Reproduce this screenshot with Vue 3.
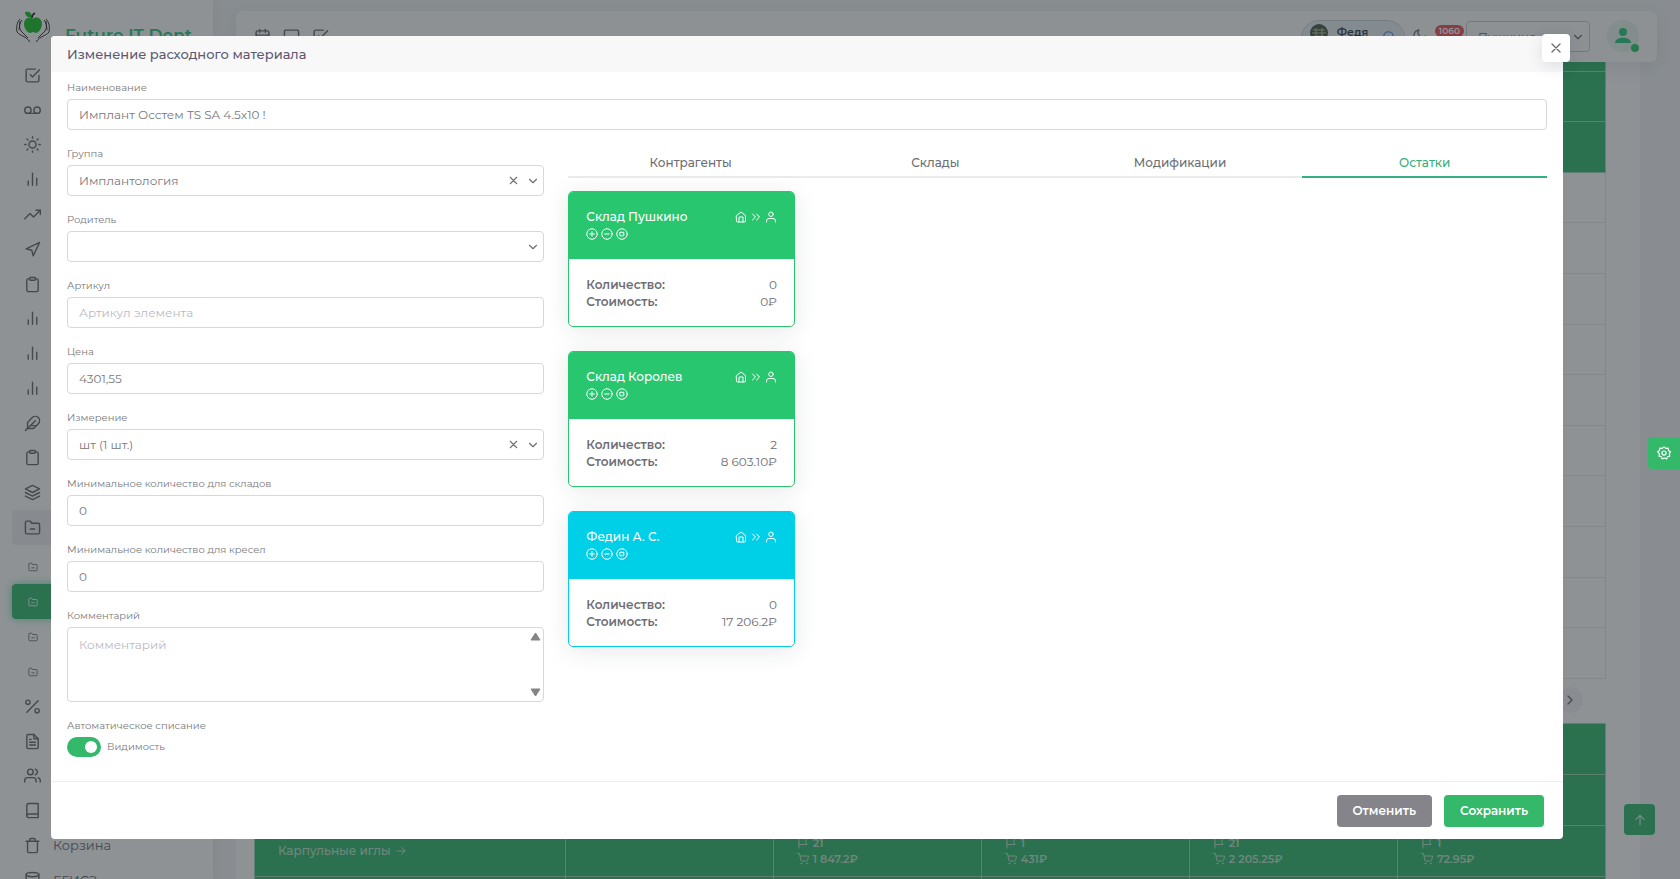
<script setup>
import {ref, h} from 'vue';

const icons = {
  check: '<path d="M9 11l3 3L22 4"/><path d="M21 12v7a2 2 0 0 1-2 2H5a2 2 0 0 1-2-2V5a2 2 0 0 1 2-2h11"/>',
  voicemail: '<circle cx="5.5" cy="11.5" r="4.5"/><circle cx="18.5" cy="11.5" r="4.5"/><path d="M5.5 16h13"/>',
  sun: '<circle cx="12" cy="12" r="5"/><path d="M12 1v2M12 21v2M4.2 4.2l1.4 1.4M18.4 18.4l1.4 1.4M1 12h2M21 12h2M4.2 19.8l1.4-1.4M18.4 5.6l1.4-1.4"/>',
  bars: '<path d="M18 20V10M12 20V3M6 20v-6"/>',
  trend: '<path d="M23 6l-9.500 9.500-5-5L1 18"/><path d="M17 6h6v6"/>',
  send: '<path d="M3 11l19-9-9 19-2-8-8-2z"/>',
  clipboard: '<path d="M16 4h2a2 2 0 0 1 2 2v14a2 2 0 0 1-2 2H6a2 2 0 0 1-2-2V6a2 2 0 0 1 2-2h2"/><rect x="8" y="2" width="8" height="4" rx="1"/>',
  feather: '<path d="M20.200 12.200a6 6 0 0 0-8.500-8.500L5 10.500V19h8.500z"/><path d="M16 8L2 22M17.500 15H9"/>',
  layers: '<path d="M12 2L2 7l10 5 10-5-10-5zM2 17l10 5 10-5M2 12l10 5 10-5"/>',
  folder: '<path d="M22 19a2 2 0 0 1-2 2H4a2 2 0 0 1-2-2V5a2 2 0 0 1 2-2h5l2 3h9a2 2 0 0 1 2 2z"/><path d="M9 14h6"/>',
  percent: '<path d="M20 4L4 20"/><circle cx="5.500" cy="6" r="3"/><circle cx="18.500" cy="18" r="3"/>',
  file: '<path d="M14 2H6a2 2 0 0 0-2 2v16a2 2 0 0 0 2 2h12a2 2 0 0 0 2-2V8z"/><path d="M14 2v6h6M16 13H8M16 17H8M10 9H8"/>',
  users: '<path d="M17 21v-2a4 4 0 0 0-4-4H5a4 4 0 0 0-4 4v2"/><circle cx="9" cy="7" r="4"/><path d="M23 21v-2a4 4 0 0 0-3-3.870M16 3.130a4 4 0 0 1 0 7.750"/>',
  book: '<path d="M4 19.500A2.500 2.500 0 0 1 6.500 17H20"/><path d="M6.500 2H20v20H6.500A2.500 2.500 0 0 1 4 19.500v-15A2.500 2.500 0 0 1 6.500 2z"/>',
  trash: '<path d="M3 6h18M19 6v14a2 2 0 0 1-2 2H7a2 2 0 0 1-2-2V6m3 0V4a2 2 0 0 1 2-2h4a2 2 0 0 1 2 2v2"/>',
  database: '<ellipse cx="12" cy="5" rx="9" ry="3"/><path d="M21 12c0 1.660-4 3-9 3s-9-1.340-9-3"/><path d="M3 5v14c0 1.660 4 3 9 3s9-1.340 9-3V5"/>',
  calendar: '<rect x="3" y="4" width="18" height="18" rx="2"/><path d="M16 2v4M8 2v4M3 10h18"/>',
  square: '<rect x="2" y="3" width="20" height="17" rx="2"/>',
  search: '<circle cx="11" cy="11" r="8"/><path d="M21 21l-4.300-4.300"/>',
  moon: '<path d="M21 12.800A9 9 0 1 1 11.200 3 7 7 0 0 0 21 12.800z"/>',
  down: '<path d="M6 9l6 6 6-6"/>',
  right: '<path d="M9 18l6-6-6-6"/>',
  x: '<path d="M18 6L6 18M6 6l12 12"/>',
  arrowRight: '<path d="M4 12h16M13 5l7 7-7 7"/>',
  arrowUp: '<path d="M12 20V4M5 11l7-7 7 7"/>',
  flag: '<path d="M4 15V3h16l-3 6 3 6H4zM4 22v-7"/>',
  cart: '<circle cx="9" cy="21" r="1"/><circle cx="20" cy="21" r="1"/><path d="M1 1h4l2.700 13.400a2 2 0 0 0 2 1.600h9.700a2 2 0 0 0 2-1.600L23 6H6"/>',
  home: '<path d="M3 9l9-7 9 7v11a2 2 0 0 1-2 2H5a2 2 0 0 1-2-2z"/><path d="M8 22V12h8v10"/>',
  chevrons: '<path d="M13 18l6-6-6-6M5 18l6-6-6-6"/>',
  user: '<path d="M21 22v-2a5 5 0 0 0-5-5H8a5 5 0 0 0-5 5v2"/><circle cx="12" cy="6.500" r="4.500"/>',
  plus: '<circle cx="12" cy="12" r="10.500"/><path d="M12 7.500v9M7.500 12h9"/>',
  minus: '<circle cx="12" cy="12" r="10.500"/><path d="M7.500 12h9"/>',
  stop: '<circle cx="12" cy="12" r="10.500"/><rect x="8.500" y="8.500" width="7" height="7"/>',
  gear: '<path d="M12 1.500l3 2.600 4-.4.700 3.900 3.300 2.400-1.900 3.500.900 3.900-3.900 1.100-1.700 3.600-3.700-1.400-3.700 1.400-1.700-3.600-3.900-1.100.900-3.900L1 10l3.300-2.400L5 3.700l4 .4z"/><circle cx="12" cy="12" r="3.500"/>',
};

const Icon = (props) => h('svg', {
  width: props.size,
  height: props.size,
  viewBox: '0 0 24 24',
  fill: 'none',
  stroke: 'currentColor',
  'stroke-width': 2,
  'stroke-linecap': 'round',
  'stroke-linejoin': 'round',
  innerHTML: icons[props.name],
});
Icon.props = ['name', 'size'];

const menuTop = ['check', 'voicemail', 'sun', 'bars', 'trend', 'send', 'clipboard', 'bars', 'bars', 'bars', 'feather', 'clipboard', 'layers', 'folder'];
const menuBottom = [
  {icon: 'percent'},
  {icon: 'file'},
  {icon: 'users'},
  {icon: 'book'},
  {icon: 'trash', text: 'Корзина'},
  {icon: 'database', text: 'ЕГИСЗ'},
];

const totals = [
  {count: '21', sum: '1 847.2₽'},
  {count: '1', sum: '431₽'},
  {count: '21', sum: '2 205.25₽'},
  {count: '1', sum: '72.95₽'},
];

const tabs = ['Контрагенты', 'Склады', 'Модификации', 'Остатки'];
const activeTab = ref('Остатки');

const stocks = [
  {name: 'Склад Пушкино', count: '0', sum: '0', type: 'store'},
  {name: 'Склад Королев', count: '2', sum: '8 603.10', type: 'store'},
  {name: 'Федин А. С.', count: '0', sum: '17 206.2', type: 'staff'},
];

const isOpen = ref(true);
const branch = ref('Пушкино');
const form = ref({
  name: 'Имплант Осстем TS SA 4.5x10 !',
  group: 'Имплантология',
  parent: '',
  article: '',
  price: '4301,55',
  unit: 'шт (1 шт.)',
  minStore: '0',
  minChair: '0',
  comment: '',
  auto: true,
});

const closeModal = () => {
  isOpen.value = false;
};
</script>

<template>
  <div class="page">
    <aside class="sidebar">
      <div class="brand">
        <svg class="logo" width="36" height="34" viewBox="0 0 36 34">
          <path d="M18 9c-3-3-9-1-9 5 0 5 4 9 6 9 1 0 2-1 3-1s2 1 3 1c2 0 6-4 6-9 0-6-6-8-9-5z" fill="#1fc029"/>
          <path d="M17 7c-4 1-7-1-7-5 4-1 7 1 7 5z" fill="#1fc029"/>
          <path d="M17 8c0-2 1-4 3-5" stroke="#222" fill="none" stroke-width="1.500"/>
          <path d="M5 9c-3 3-4 8-3 13 3 4 9 4 13 10M7 10c-3 4-3 8-1 11l7 7M31 9c3 3 4 8 3 13-3 4-9 4-13 10M29 10c3 4 3 8 1 11l-7 7M5 11l-1 9M31 11l1 9" stroke="#333" fill="none"/>
        </svg>
        <span class="brand-text">Future IT Dent</span>
      </div>
      <nav class="menu menu-top">
        <a v-for="(icon, i) in menuTop" :key="i" href="#" class="menu-item" :class="{open: icon === 'folder'}">
          <Icon :name="icon" size="17"/>
        </a>
      </nav>
      <nav class="menu menu-sub">
        <a v-for="i in 4" :key="i" href="#" class="menu-item" :class="{active: i === 2}">
          <Icon name="folder" size="10"/>
        </a>
      </nav>
      <nav class="menu menu-bottom">
        <a v-for="item in menuBottom" :key="item.icon" href="#" class="menu-item">
          <Icon :name="item.icon" size="17"/>
          <span>{{ item.text }}</span>
        </a>
      </nav>
    </aside>

    <main class="main">
      <header class="navbar">
        <div class="shortcuts">
          <Icon name="calendar" size="17"/>
          <Icon name="square" size="17"/>
          <Icon name="check" size="17"/>
        </div>
        <div class="nav-right">
          <div class="person">
            <svg width="18" height="18" viewBox="0 0 18 18">
              <circle cx="9" cy="9" r="9" fill="#4b5a48"/>
              <path d="M3 6h12M2 9h14M4 12h10M6 4v10M12 4v10" stroke="#b9c9a8" fill="none"/>
            </svg>
            <span>Федя</span>
            <Icon name="search" size="14"/>
          </div>
          <Icon name="moon" size="15"/>
          <span class="badge">1060</span>
          <div class="branch">
            <select v-model="branch" aria-label="Филиал">
              <option>Пушкино</option>
            </select>
            <Icon name="down" size="14"/>
          </div>
          <div class="avatar">
            <svg width="16" height="16" viewBox="0 0 16 16" fill="#28c780">
              <circle cx="8" cy="4" r="4"/>
              <path d="M0 15c0-7 16-7 16 0z"/>
            </svg>
            <i class="online"></i>
          </div>
        </div>
      </header>

      <section class="content">
        <table class="grid grid-top">
          <tbody>
            <tr v-for="i in 13" :key="i" :class="{green: i < 4}">
              <td></td>
            </tr>
          </tbody>
        </table>
        <div class="scroller">
          <button type="button" aria-label="Вправо"><Icon name="right" size="16"/></button>
        </div>
        <table class="grid grid-bottom">
          <tbody>
            <tr v-for="i in 4" :key="i" class="green">
              <td class="first">
                <a v-if="i === 3" href="#">Карпульные иглы <Icon name="arrowRight" size="12"/></a>
              </td>
              <td></td>
              <td v-for="(t, k) in totals" :key="k">
                <template v-if="i === 3">
                  <div class="total"><Icon name="flag" size="12"/>{{ t.count }}</div>
                  <div class="total"><Icon name="cart" size="12"/>{{ t.sum }}</div>
                </template>
              </td>
            </tr>
          </tbody>
        </table>
      </section>
    </main>
    <button type="button" class="to-top" aria-label="Наверх"><Icon name="arrowUp" size="14"/></button>
  </div>

  <div v-if="isOpen" class="modal-overlay" @click.self="closeModal">
    <form class="modal" @submit.prevent="closeModal">
      <div class="modal-header">
        <h5>Изменение расходного материала</h5>
        <button type="button" class="close" aria-label="Закрыть" @click="closeModal"><Icon name="x" size="16"/></button>
      </div>

      <div class="modal-body">
        <div class="field wide">
          <label for="name">Наименование</label>
          <input id="name" v-model="form.name" type="text"/>
        </div>

        <div class="left">
          <div class="field">
            <label for="group">Группа</label>
            <div class="select">
              <select id="group" v-model="form.group">
                <option value=""></option>
                <option>Имплантология</option>
              </select>
              <button type="button" class="clear" aria-label="Очистить" @click="form.group = ''"><Icon name="x" size="13"/></button>
              <Icon class="arrow" name="down" size="14"/>
            </div>
          </div>
          <div class="field">
            <label for="parent">Родитель</label>
            <div class="select">
              <select id="parent" v-model="form.parent">
                <option value=""></option>
              </select>
              <Icon class="arrow" name="down" size="14"/>
            </div>
          </div>
          <div class="field">
            <label for="article">Артикул</label>
            <input id="article" v-model="form.article" type="text" placeholder="Артикул элемента"/>
          </div>
          <div class="field">
            <label for="price">Цена</label>
            <input id="price" v-model="form.price" type="text"/>
          </div>
          <div class="field">
            <label for="unit">Измерение</label>
            <div class="select">
              <select id="unit" v-model="form.unit">
                <option value=""></option>
                <option>шт (1 шт.)</option>
              </select>
              <button type="button" class="clear" aria-label="Очистить" @click="form.unit = ''"><Icon name="x" size="13"/></button>
              <Icon class="arrow" name="down" size="14"/>
            </div>
          </div>
          <div class="field">
            <label for="min-store">Минимальное количество для складов</label>
            <input id="min-store" v-model="form.minStore" type="text"/>
          </div>
          <div class="field">
            <label for="min-chair">Минимальное количество для кресел</label>
            <input id="min-chair" v-model="form.minChair" type="text"/>
          </div>
          <div class="field">
            <label for="comment">Комментарий</label>
            <div class="area">
              <textarea id="comment" v-model="form.comment" placeholder="Комментарий"></textarea>
              <svg class="area-up" width="11" height="9" viewBox="0 0 11 9"><path d="M5.500 1L10 8H1z"/></svg>
              <svg class="area-down" width="11" height="9" viewBox="0 0 11 9"><path d="M5.500 8L10 1H1z"/></svg>
            </div>
          </div>
          <div class="field">
            <span class="caption">Автоматическое списание</span>
            <div class="toggle">
              <input id="auto" v-model="form.auto" type="checkbox"/>
              <label for="auto">Видимость</label>
            </div>
          </div>
        </div>

        <div class="right">
          <div class="tabs" role="tablist">
            <button
              v-for="tab in tabs"
              :key="tab"
              type="button"
              role="tab"
              :class="{active: tab === activeTab}"
              @click="activeTab = tab"
            >{{ tab }}</button>
          </div>
          <div class="stocks">
            <article v-for="stock in stocks" :key="stock.name" class="card" :class="stock.type">
              <header>
                <div class="card-line">
                  <h6>{{ stock.name }}</h6>
                  <div class="move">
                    <Icon name="home" size="12"/>
                    <Icon name="chevrons" size="12"/>
                    <Icon name="user" size="12"/>
                  </div>
                </div>
                <div class="actions">
                  <button type="button" aria-label="Добавить"><Icon name="plus" size="12"/></button>
                  <button type="button" aria-label="Списать"><Icon name="minus" size="12"/></button>
                  <button type="button" aria-label="Обнулить"><Icon name="stop" size="12"/></button>
                </div>
              </header>
              <div class="card-body">
                <div class="card-line"><b>Количество:</b><span>{{ stock.count }}</span></div>
                <div class="card-line"><b>Стоимость:</b><span>{{ stock.sum }}₽</span></div>
              </div>
            </article>
          </div>
        </div>
      </div>

      <div class="modal-footer">
        <button type="button" class="btn cancel" @click="closeModal">Отменить</button>
        <button type="submit" class="btn save">Сохранить</button>
      </div>
    </form>
  </div>
  <button type="button" class="customizer" aria-label="Настройки"><Icon name="gear" size="14"/></button>
</template>

<style>
body {
  margin: 0;
  background: #f8f8f8;
}
</style>

<style scoped>
.page,
.modal-overlay {
  font-family: Montserrat, Inter, "Noto Sans", sans-serif;
  font-size: 12px;
  line-height: 16px;
  color: #6e6e73;
}

.page,
.page *,
.modal-overlay,
.modal-overlay *,
.customizer {
  box-sizing: border-box;
}

button,
input,
select,
textarea {
  font: inherit;
  color: inherit;
}

button {
  border: 0;
  padding: 0;
  background: none;
  cursor: pointer;
}

svg {
  display: block;
  flex: none;
}

a {
  color: inherit;
  text-decoration: none;
}

.page {
  display: flex;
  height: 100vh;
  overflow: hidden;
  background: #f0f1f2;
}

/* sidebar */
.sidebar {
  flex: none;
  width: 213px;
  background: #fbfbfb;
  box-shadow: 0 0 15px rgba(34, 41, 47, 0.08);
}

.brand {
  display: flex;
  gap: 14px;
  height: 58px;
  padding: 10px 0 0 15px;
}

.brand-text {
  padding-top: 14px;
  font-size: 17px;
  line-height: 22px;
  font-weight: 600;
  color: #28c780;
}

.menu {
  display: flex;
  flex-direction: column;
  padding-left: 12px;
}

.menu-top {
  height: 487px;
}

.menu-sub {
  height: 144px;
  padding-top: 4px;
}

.menu-bottom {
  height: 208px;
}

.menu-item {
  flex: 1;
  display: flex;
  align-items: center;
  gap: 12px;
  padding-left: 12px;
  font-size: 13px;
  color: #68696e;
}

.menu-item.open {
  background: #ececee;
  border-radius: 4px;
}

.menu-sub .menu-item {
  padding-left: 16px;
}

.menu-item.active {
  background: #34b96f;
  color: #fff;
  border-radius: 4px 0 0 4px;
  box-shadow: 0 0 8px rgba(40, 199, 111, 0.6);
}

/* top bar */
.main {
  flex: 1;
  display: flex;
  flex-direction: column;
  padding: 11px 23px 0;
}

.navbar {
  position: relative;
  z-index: 1;
  flex: none;
  display: flex;
  justify-content: space-between;
  height: 51px;
  padding: 9px 18px 0;
  background: #f8f8f8;
  border-radius: 6px;
  box-shadow: 0 4px 20px rgba(34, 41, 47, 0.1);
}

.shortcuts {
  display: flex;
  gap: 12px;
  padding-top: 8px;
  color: #68696e;
}

.nav-right {
  display: flex;
  align-items: flex-start;
}

.nav-right > svg {
  margin: 8px 10px 0 7px;
}

.person {
  display: flex;
  gap: 9px;
  width: 104px;
  height: 36px;
  padding: 3px 8px;
  border: 1px solid #c5d0d8;
  border-radius: 18px;
  background: #e6edf0;
  color: #3a3a44;
  font-size: 11px;
  font-weight: 600;
}

.person span {
  flex: 1;
}

.person svg:last-child {
  margin-top: 6px;
  color: #3a6fe0;
}

.badge {
  z-index: 1;
  height: 12px;
  margin: 5px 2px 0 -2px;
  padding: 0 4px;
  border-radius: 6px;
  background: #ea5455;
  color: #fff;
  font-size: 9px;
  line-height: 12px;
  font-weight: 600;
}

.branch {
  display: flex;
  align-items: center;
  width: 124px;
  height: 31px;
  margin-top: 1px;
  padding: 0 4px 0 11px;
  border: 1px solid #c8c8cc;
  border-radius: 4px;
}

.branch select {
  flex: 1;
  appearance: none;
  border: 0;
  background: none;
}

.avatar {
  position: relative;
  display: grid;
  place-items: center;
  width: 32px;
  height: 32px;
  margin-left: 17px;
  border-radius: 50%;
  background: #e2f0e9;
}

.online {
  position: absolute;
  right: 0;
  bottom: 0;
  width: 8px;
  height: 8px;
  border-radius: 50%;
  background: #28c76f;
}

/* background table */
.content {
  flex: none;
  margin: -42px 17px 0 0;
  padding: 0 34px 0 18px;
  background: #fafafb;
}

.grid {
  width: 100%;
  border-collapse: collapse;
  table-layout: fixed;
}

.grid-top {
  height: 659px;
}

.grid-bottom td {
  height: 51px;
}

.grid td {
  padding: 0 23px;
  border: 1px solid #e6e6ea;
}

.grid .green td {
  background: #34b96f;
  border-color: #9bd6b5;
  color: #bde2cc;
  font-weight: 500;
}

.grid .first {
  width: 23%;
}

.first a,
.total {
  display: flex;
  align-items: center;
  gap: 4px;
}

.total {
  font-size: 11px;
  font-weight: 600;
}

.scroller {
  display: flex;
  justify-content: flex-end;
  height: 44px;
  padding: 8px 23px 0;
}

.scroller button {
  display: grid;
  place-items: center;
  width: 26px;
  height: 26px;
  border-radius: 50%;
  background: #f0f0f2;
}

.to-top {
  position: fixed;
  right: 25px;
  bottom: 44px;
  display: grid;
  place-items: center;
  width: 31px;
  height: 31px;
  border-radius: 4px;
  background: #34b96f;
  color: #d6f0e0;
}

.customizer {
  position: fixed;
  z-index: 11;
  right: 0;
  top: 437px;
  display: grid;
  place-items: center;
  width: 32px;
  height: 32px;
  border-radius: 4px 0 0 4px;
  background: #34b96b;
  color: #fff;
}

/* modal */
.modal-overlay {
  position: fixed;
  z-index: 10;
  inset: 0;
  padding: 36px 0 0 51px;
  background: rgba(34, 41, 47, 0.5);
}

.modal {
  width: 90vw;
  background: #fff;
  border-radius: 4px;
}

.modal-header {
  position: relative;
  padding: 8px 16px;
  background: #f8f8f9;
  border-radius: 4px 4px 0 0;
}

h5,
h6 {
  margin: 0;
  font-weight: 500;
}

h5 {
  font-size: 13px;
  line-height: 20px;
  color: #5e5873;
}

.close {
  position: absolute;
  top: -2px;
  right: -7px;
  display: grid;
  place-items: center;
  width: 28px;
  height: 28px;
  background: #fff;
  border-radius: 4px;
  box-shadow: 0 4px 16px rgba(34, 41, 47, 0.12);
}

.modal-body {
  display: grid;
  grid-template-columns: repeat(12, 1fr);
  column-gap: 24px;
  padding: 8px 16px;
}

.wide {
  grid-column: span 12;
}

.left {
  grid-column: span 4;
}

.right {
  grid-column: span 8;
}

.field {
  margin-bottom: 16px;
}

.field > label,
.caption {
  display: block;
  margin-bottom: 3px;
  font-size: 10px;
  color: #78787c;
}

.field > input,
.select select,
textarea {
  display: block;
  width: 100%;
  height: 31px;
  padding: 0 11px;
  border: 1px solid #d8d6de;
  border-radius: 4px;
  background: #fff;
  color: #78787c;
  outline: 0;
}

.select {
  position: relative;
}

.select select {
  appearance: none;
}

.arrow {
  position: absolute;
  top: 9px;
  right: 4px;
}

.clear {
  position: absolute;
  top: 9px;
  right: 24px;
}

.area {
  position: relative;
}

textarea {
  height: 75px;
  padding: 9px 11px;
  resize: none;
}

::placeholder {
  color: #b9b9c3;
  opacity: 1;
}

.area svg {
  position: absolute;
  right: 3px;
  fill: #858386;
  stroke: #858386;
  stroke-linejoin: round;
}

.area-up {
  top: 5px;
}

.area-down {
  bottom: 5px;
}

.toggle {
  display: flex;
  align-items: center;
  gap: 6px;
  font-size: 10px;
  color: #78787c;
}

.toggle input {
  appearance: none;
  width: 34px;
  height: 20px;
  margin: 0;
  padding: 4px;
  border-radius: 10px;
  background: #d8d6de;
}

.toggle input::before {
  content: "";
  display: block;
  width: 12px;
  height: 12px;
  border-radius: 50%;
  background: #fff;
}

.toggle input:checked {
  background: #34b96b;
}

.toggle input:checked::before {
  margin-left: auto;
}

.tabs {
  display: flex;
  border-bottom: 2px solid #ebebed;
}

.tabs button {
  flex: 1;
  height: 32px;
  margin-bottom: -2px;
  padding-top: 3px;
  border-bottom: 2px solid transparent;
  font-weight: 500;
}

.tabs .active {
  border-color: #34b080;
  color: #34b080;
}

.stocks {
  display: grid;
  grid-template-columns: repeat(4, 1fr);
  gap: 24px;
  margin-top: 13px;
}

.card {
  grid-column: 1;
  overflow: hidden;
  border: 1px solid #28c76f;
  border-radius: 5px;
  box-shadow: 0 4px 24px rgba(34, 41, 47, 0.1);
}

.card header {
  height: 67px;
  padding: 16px 17px;
  background: #28c76f;
  color: #fff;
}

.card.staff {
  border-color: #00cfe8;
}

.card.staff header {
  background: #00cfe8;
}

.card-line {
  display: flex;
  justify-content: space-between;
  align-items: center;
  line-height: 17px;
}

h6 {
  font-size: 12px;
}

.card-line b {
  font-weight: 600;
}

.move {
  display: flex;
  gap: 3px;
}

.actions {
  display: flex;
  gap: 3px;
  margin-top: 3px;
}

.card-body {
  height: 67px;
  padding: 17px 17px 0;
}

.modal-footer {
  display: flex;
  justify-content: flex-end;
  gap: 12px;
  padding: 13px 19px 12px;
  border-top: 1px solid #ededf0;
}

.btn {
  height: 32px;
  padding: 0 16px;
  border-radius: 4px;
  color: #fff;
  font-weight: 600;
}

.cancel {
  background: #85848a;
}

.save {
  background: #34b96b;
}
</style>
